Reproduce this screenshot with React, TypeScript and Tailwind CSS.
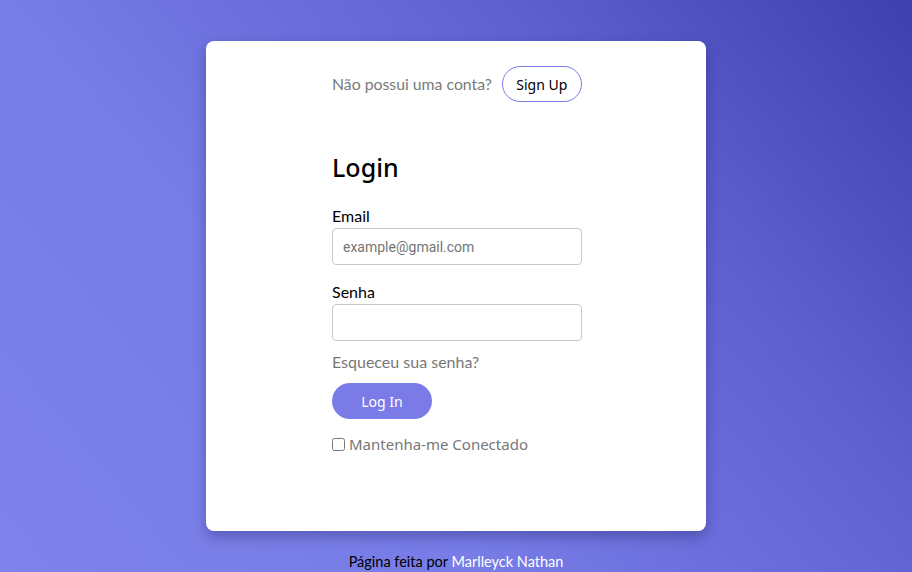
export default function App() {
  return (
    <div className="min-h-screen w-full bg-[linear-gradient(50deg,#7e82ea_0%,#777ce6_35%,#5f61d2_70%,#3f40ae_100%)] flex flex-col items-center pt-[41px] font-['Lato',sans-serif]">
      <main className="w-[500px] h-[490px] rounded-lg bg-white shadow-[0_6px_14px_rgba(30,30,90,0.35)] pt-[25px] pl-[126px]">
        <div className="w-[250px] flex items-center gap-[10px] whitespace-nowrap">
          <span className="text-[15.8px] text-[#7a7a7a] font-['Lato',sans-serif]">Não possui uma conta?</span>
          <button className="shrink-0 w-[80px] h-[36px] rounded-[18px] border border-[#7b7be8] bg-white text-[14px] text-black font-['Noto_Sans',sans-serif]">
            Sign Up
          </button>
        </div>

        <h1 className="mt-[48px] text-[25px] leading-[34px] font-medium text-black font-['Noto_Sans',sans-serif]">
          Login
        </h1>

        <form className="w-[250px] mt-[22px] flex flex-col">
          <label className="text-[16px] leading-[20px] text-black">Email</label>
          <input
            type="email"
            placeholder="example@gmail.com"
            className="mt-[2px] h-[37px] w-[250px] rounded-[4px] border border-[#c8c8c8] px-[10px] text-[14px] font-['Roboto',sans-serif] placeholder:text-[#757575] outline-none"
          />
          <label className="mt-[17px] text-[16px] leading-[20px] text-black">Senha</label>
          <input
            type="password"
            className="mt-[2px] h-[37px] w-[250px] rounded-[4px] border border-[#c8c8c8] px-[10px] text-[14px] outline-none"
          />
          <a className="mt-[11px] text-[16px] leading-[20px] text-[#777777]">Esqueceu sua senha?</a>
          <button
            type="button"
            className="mt-[11px] w-[100px] h-[36px] rounded-[18px] bg-[#7b7be8] text-white text-[14px] font-['Noto_Sans',sans-serif]"
          >
            Log In
          </button>
          <label className="mt-[15px] flex items-center gap-[4px] text-[15px] leading-[20px] text-[#777777] font-['Noto_Sans',sans-serif] whitespace-nowrap">
            <input type="checkbox" className="w-[13px] h-[13px] m-0" />
            Mantenha-me Conectado
          </label>
        </form>
      </main>
      <footer className="mt-[21px] text-[14.5px] leading-[20px] text-black">
        Página feita por <span className="text-white">Marlleyck Nathan</span>
      </footer>
    </div>
  );
}
